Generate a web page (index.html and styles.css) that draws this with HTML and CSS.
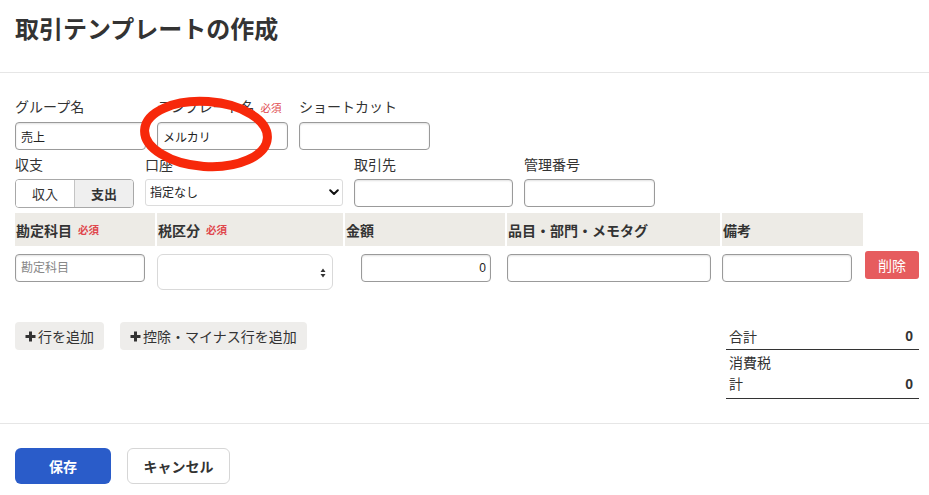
FILE: index.html
```html
<!DOCTYPE html>
<html lang="ja">
<head>
<meta charset="utf-8">
<title>取引テンプレートの作成</title>
<link rel="stylesheet" href="styles.css">
</head>
<body>
<div class="page">
  <header class="page-header">
    <h1 class="title">取引テンプレートの作成</h1>
  </header>

  <main class="form">
    <div class="row row-top">
      <div class="field w131">
        <label class="label">グループ名</label>
        <input class="input" type="text" value="売上">
      </div>
      <div class="field w131">
        <label class="label">テンプレート名<span class="req">必須</span></label>
        <input class="input" type="text" value="メルカリ">
      </div>
      <div class="field w131">
        <label class="label">ショートカット</label>
        <input class="input" type="text">
      </div>
    </div>

    <div class="row row-second">
      <div class="field w119">
        <label class="label">収支</label>
        <div class="toggle">
          <span class="toggle-btn">収入</span>
          <span class="toggle-btn active">支出</span>
        </div>
      </div>
      <div class="field w198">
        <label class="label">口座</label>
        <div class="select-wrap">
          <select class="select"><option>指定なし</option></select>
          <svg class="chev" width="10" height="7" viewBox="0 0 10 7"><path d="M1.2 1.3 L5 5 L8.8 1.3" fill="none" stroke="#111" stroke-width="2" stroke-linecap="round" stroke-linejoin="round"/></svg>
        </div>
      </div>
      <div class="field w159">
        <label class="label">取引先</label>
        <input class="input" type="text">
      </div>
      <div class="field w131">
        <label class="label">管理番号</label>
        <input class="input" type="text">
      </div>
    </div>

    <div class="table">
      <div class="thead">
        <div class="th">勘定科目<span class="req bold">必須</span></div>
        <div class="th">税区分<span class="req bold">必須</span></div>
        <div class="th">金額</div>
        <div class="th">品目・部門・メモタグ</div>
        <div class="th">備考</div>
      </div>
      <div class="trow">
        <div class="td"><input class="input w130" type="text" placeholder="勘定科目"></div>
        <div class="td">
          <div class="tax-select">
            <svg class="updown" width="6" height="10" viewBox="0 0 6 10"><path d="M3 0.5 L5.5 4 H0.5 Z M3 9.5 L5.5 6 H0.5 Z" fill="#333"/></svg>
          </div>
        </div>
        <div class="td"><input class="input w130 amount" type="text" value="0"></div>
        <div class="td"><input class="input w204" type="text"></div>
        <div class="td"><input class="input w130" type="text"></div>
        <div class="td"><button class="btn-delete" type="button">削除</button></div>
      </div>
    </div>

    <div class="bottom">
      <div class="add-buttons">
        <button class="btn-add" type="button"><svg class="plus" width="11" height="11" viewBox="0 0 11 11"><path d="M5.5 0.5 V10.5 M0.5 5.5 H10.5" stroke="#333" stroke-width="3"/></svg>行を追加</button>
        <button class="btn-add" type="button"><svg class="plus" width="11" height="11" viewBox="0 0 11 11"><path d="M5.5 0.5 V10.5 M0.5 5.5 H10.5" stroke="#333" stroke-width="3"/></svg>控除・マイナス行を追加</button>
      </div>
      <div class="totals">
        <div class="total-row sum">
          <span class="total-label">合計</span>
          <span class="total-value">0</span>
        </div>
        <div class="total-row tax">
          <span class="total-label narrow">消費税計</span>
          <span class="total-value">0</span>
        </div>
      </div>
    </div>
  </main>

  <footer class="page-footer">
    <button class="btn-save" type="button">保存</button>
    <button class="btn-cancel" type="button">キャンセル</button>
  </footer>

  <svg class="annotation" width="160" height="95" viewBox="0 0 160 95">
    <ellipse cx="76" cy="46" rx="61.5" ry="32.5" transform="rotate(4 76 46)" fill="none" stroke="#f7280a" stroke-width="9"/>
  </svg>
</div>
</body>
</html>
```

FILE: styles.css
```css
* { box-sizing: border-box; }

html, body {
  margin: 0;
  padding: 0;
  background: #fff;
}

body {
  font-family: "Liberation Sans", "Noto Sans CJK JP", sans-serif;
  color: #333;
  font-size: 14px;
}

.page {
  position: relative;
  width: 929px;
}

.page-header {
  height: 73px;
  padding: 14px 15px 0;
  border-bottom: 1px solid #e6e6e6;
}

.title {
  margin: 0;
  font-size: 24px;
  line-height: 32px;
  font-weight: 700;
  color: #333;
}

.form {
  padding: 24px 10px 24px 15px;
}

.row {
  display: flex;
  gap: 11px;
}

.row-second {
  margin-top: 5px;
}

.field {
  display: flex;
  flex-direction: column;
}

.w119 { width: 119px; }
.w131 { width: 131px; }
.w159 { width: 159px; }
.w198 { width: 198px; }

.label {
  display: block;
  height: 20px;
  font-size: 14px;
  line-height: 20px;
  margin-bottom: 5px;
  color: #333;
  white-space: nowrap;
  overflow: visible;
}
.row-second .label { margin-bottom: 4px; }

.req {
  color: #e0474c;
  font-size: 10.5px;
  line-height: 10px;
  margin-left: 6px;
}
.req.bold { font-weight: 700; margin-left: 6px; }

.input {
  display: block;
  width: 100%;
  height: 28px;
  padding: 0 5px;
  border: 1px solid #9a9a9a;
  border-radius: 4px;
  background: #fff;
  box-shadow: inset 0 1px 2px rgba(0, 0, 0, 0.12);
  font-family: inherit;
  font-size: 12px;
  color: #222;
  outline: none;
}
.input::placeholder { color: #888; }

.w130 { width: 130px; }
.w204 { width: 204px; }

.amount {
  margin-left: 16px;
  text-align: right;
  padding-right: 4px;
}

.toggle {
  display: flex;
  height: 29px;
  border: 1px solid #a8a8a8;
  border-radius: 4px;
  overflow: hidden;
}
.toggle-btn {
  flex: 1;
  display: flex;
  align-items: center;
  justify-content: center;
  font-size: 13px;
  color: #333;
  background: #fff;
}
.toggle-btn.active {
  background: #efefef;
  border-left: 1px solid #c4c4c4;
  font-weight: 700;
}

.select-wrap {
  position: relative;
  height: 27px;
}
.select {
  appearance: none;
  -webkit-appearance: none;
  width: 100%;
  height: 27px;
  border: 1px solid #dcdcdc;
  border-radius: 3px;
  background: #fff;
  padding: 0 4px;
  font-family: inherit;
  font-size: 12px;
  color: #222;
  outline: none;
}
.chev {
  position: absolute;
  right: 4px;
  top: 10px;
}

.table {
  margin-top: 5px;
}
.thead, .trow {
  display: grid;
  grid-template-columns: 140px 186px 160px 213px 141px 54px;
  column-gap: 2px;
}
.th {
  height: 33px;
  background: #edebe6;
  font-weight: 700;
  font-size: 14px;
  padding-left: 1px;
  display: flex;
  align-items: center;
  white-space: nowrap;
}
.trow {
  padding-top: 5px;
  align-items: start;
}
.td .input { margin-top: 3px; }

.tax-select {
  position: relative;
  margin-top: 3px;
  width: 176px;
  height: 36px;
  border: 1px solid #d9d9d9;
  border-radius: 6px;
  background: #fff;
}
.updown {
  position: absolute;
  right: 6px;
  top: 13px;
}

.btn-delete {
  display: block;
  width: 54px;
  height: 28px;
  border: none;
  border-radius: 3px;
  background: #e65c5e;
  color: #fff;
  font-family: inherit;
  font-size: 14px;
  padding: 0;
}

.bottom {
  display: flex;
  justify-content: space-between;
  align-items: flex-start;
  margin-top: 32px;
}
.add-buttons {
  display: flex;
  gap: 16px;
}
.btn-add {
  display: flex;
  align-items: center;
  gap: 1px;
  height: 28px;
  padding: 0 10px 0 10px;
  border: none;
  border-radius: 4px;
  background: #eeedeb;
  color: #333;
  font-family: inherit;
  font-size: 14px;
}
.plus { margin-right: 1px; }

.totals {
  width: 193px;
}
.total-row {
  display: flex;
  justify-content: space-between;
  align-items: flex-end;
  border-bottom: 1px solid #333;
  padding: 0 6px 0 3px;
}
.total-row.sum {
  height: 28px;
  align-items: center;
}
.total-row.tax {
  padding-top: 3px;
  padding-bottom: 3px;
  line-height: 21px;
}
.total-label { font-size: 14px; }
.total-label.narrow { width: 44px; }
.total-value {
  font-weight: 700;
  font-size: 14px;
}

.page-footer {
  border-top: 1px solid #e6e6e6;
  padding: 24px 15px;
  display: flex;
  gap: 16px;
}
.btn-save, .btn-cancel {
  height: 36px;
  border-radius: 6px;
  font-family: inherit;
  font-size: 14px;
  font-weight: 700;
  padding: 0;
}
.btn-save {
  width: 96px;
  background: #2a5cc9;
  color: #fff;
  border: none;
}
.btn-cancel {
  width: 103px;
  background: #fff;
  color: #333;
  border: 1px solid #d6d6d6;
}

.annotation {
  position: absolute;
  left: 130px;
  top: 88px;
  pointer-events: none;
}
```
